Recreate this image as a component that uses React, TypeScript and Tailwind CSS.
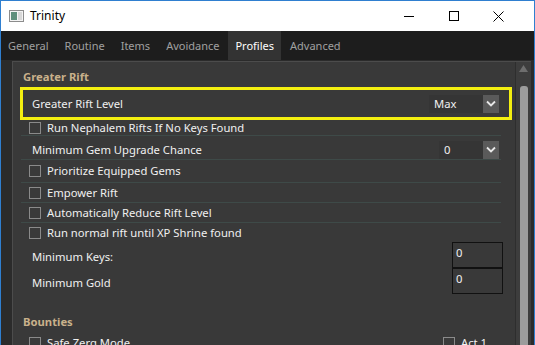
const tabs = ["General", "Routine", "Items", "Avoidance", "Profiles", "Advanced"];

function Check() {
  return <span className="w-[12px] h-[12px] border border-[#8a8a8a] bg-[#3a3a3a] shrink-0" />;
}

function Arrow() {
  return (
    <span className="w-[16px] h-[18px] bg-[#5a5a5a] flex items-center justify-center shrink-0">
      <svg width="10" height="7" viewBox="0 0 10 7">
        <path d="M1 1.5 L5 5.5 L9 1.5" fill="none" stroke="#e8e8e8" strokeWidth="1.8" />
      </svg>
    </span>
  );
}

function CheckRow({ label, h, line = true }: { label: string; h: string; line?: boolean }) {
  return (
    <div className={`flex items-center gap-[6px] pl-[8px] ${h} ${line ? "border-b border-[#3e4a48]" : ""}`}>
      <Check />
      <span>{label}</span>
    </div>
  );
}

export default function App() {
  return (
    <div className="w-[535px] h-[345px] flex flex-col overflow-hidden border border-b-0 border-[#2f7fd0] font-['Noto_Sans',sans-serif] text-[11.25px] leading-[16px]">
      {/* title bar */}
      <div className="h-[30px] bg-white flex items-center shrink-0">
        <svg width="15" height="12" viewBox="0 0 15 12" className="ml-[8px]">
          <rect x="0.5" y="0.5" width="14" height="11" fill="#f4f4f4" stroke="#8c8c8c" />
          <rect x="2" y="2" width="6" height="8" fill="#5f8f7c" />
          <rect x="9" y="2" width="4" height="8" fill="#d8d8d8" />
        </svg>
        <span className="ml-[6px] text-black text-[12px]">Trinity</span>
        <div className="ml-auto mr-[13px] flex items-center">
          <div className="w-[45px] h-[30px] flex items-center justify-center">
            <span className="w-[10px] h-px bg-black" />
          </div>
          <div className="w-[45px] h-[30px] flex items-center justify-center">
            <span className="w-[10px] h-[10px] border border-black" />
          </div>
          <div className="w-[45px] h-[30px] flex items-center justify-center">
            <svg width="11" height="11" viewBox="0 0 11 11">
              <path d="M0.5 0.5 L10.5 10.5 M10.5 0.5 L0.5 10.5" stroke="#000" strokeWidth="1" />
            </svg>
          </div>
        </div>
      </div>

      {/* tab bar */}
      <div className="h-[29px] bg-[#1d1d1d] flex gap-[2px] shrink-0 text-[11px]">
        {tabs.map((t) => (
          <div
            key={t}
            className={`h-full flex items-center px-[7px] ${
              t === "Profiles" ? "bg-[#333333] text-white" : "text-[#a0a0a0]"
            }`}
          >
            {t}
          </div>
        ))}
      </div>

      {/* body */}
      <div className="flex-1 bg-[#2b2b2b] pl-[11px] pr-[3px] pt-[1px] flex min-h-0">
        <div className="flex-1 flex border-l border-t border-[#4c4c4c] bg-[#393939] min-h-0">
          <div className="flex-1 overflow-hidden text-[#f0f0f0]">
            <div className="mt-[7px] pl-[10px] font-bold text-[#c9b18b]">Greater Rift</div>

            <div className="ml-[7px] mr-[3px] mt-[2px] h-[33px] border-[3px] border-[#f4ef10] flex items-center pl-[9px] pr-[10px]">
              <span>Greater Rift Level</span>
              <span className="ml-auto w-[54px] h-[18px] flex items-center pl-[5px] bg-[#353535]">Max</span>
              <Arrow />
            </div>

            <div className="ml-[8px] mr-[14px]">
              <CheckRow label="Run Nephalem Rifts If No Keys Found" h="h-[16px]" />
              <div className="h-[24px] pt-[4px] flex items-center pl-[11px] pr-[2px] border-b border-[#3e4a48]">
                <span>Minimum Gem Upgrade Chance</span>
                <span className="ml-auto w-[44px] h-[18px] flex items-center pl-[5px] bg-[#353535]">0</span>
                <Arrow />
              </div>
              <CheckRow label="Prioritize Equipped Gems" h="h-[23px]" />
              <CheckRow label="Empower Rift" h="h-[20px]" />
              <CheckRow label="Automatically Reduce Rift Level" h="h-[20px]" />
              <CheckRow label="Run normal rift until XP Shrine found" h="h-[19px]" line={false} />

              <div className="flex items-center pl-[11px]">
                <span className="pt-[3px]">Minimum Keys:</span>
                <div className="ml-auto -mr-[2px] w-[51px] h-[26px] border border-[#111] pl-[3px] pt-[2px]">0</div>
              </div>
              <div className="flex items-center pl-[11px]">
                <span className="pt-[3px]">Minimum Gold</span>
                <div className="ml-auto -mr-[2px] w-[51px] h-[26px] border border-[#111] pl-[3px] pt-[2px]">0</div>
              </div>
            </div>

            <div className="mt-[20px] pl-[10px] font-bold text-[#c9b18b]">Bounties</div>
            <div className="ml-[8px] mr-[14px] mt-[5px] flex items-center">
              <div className="flex items-center gap-[6px] pl-[8px]">
                <Check />
                <span>Safe Zerg Mode</span>
              </div>
              <div className="ml-auto mr-[14px] flex items-center gap-[6px]">
                <Check />
                <span>Act 1</span>
              </div>
            </div>
          </div>

          {/* scrollbar */}
          <div className="w-[16px] border-l border-[#2e2e2e] bg-[#3d3d3d] flex flex-col items-center pt-[3px]">
            <svg width="9" height="7" viewBox="0 0 9 7">
              <path d="M4.5 0 L9 7 L0 7 Z" fill="#6e6e6e" />
            </svg>
            <div className="mt-[14px] w-[8px] flex-1 bg-[#9c9c9c] rounded-t-[3px]" />
          </div>
        </div>
      </div>
    </div>
  );
}
